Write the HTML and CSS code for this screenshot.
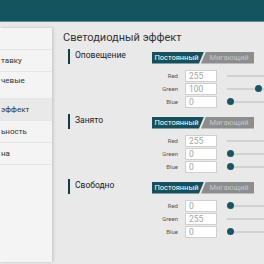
FILE: index.html
```html
<!DOCTYPE html>
<html lang="ru">
<head>
<meta charset="utf-8">
<link rel="stylesheet" href="styles.css">
</head>
<body>
<div class="header"></div>
<div class="layout">
  <nav class="sidebar">
    <div class="item"></div>
    <div class="item">тавку</div>
    <div class="item tall">чевые</div>
    <div class="item active">эффект</div>
    <div class="item">ьность</div>
    <div class="item">на</div>
  </nav>
  <main class="main">
    <h1 class="title">Светодиодный эффект</h1>

    <section class="section">
      <div class="sec-head">
        <span class="sec-name">Оповещение</span>
        <div class="toggle"><span class="on">Постоянный</span><span class="off">Мигающий</span></div>
      </div>
      <div class="row"><span class="lbl">Red</span><span class="val">255</span><div class="slider"><span class="thumb" style="left:70px"></span></div></div>
      <div class="row"><span class="lbl">Green</span><span class="val">100</span><div class="slider"><span class="thumb" style="left:27.5px"></span></div></div>
      <div class="row"><span class="lbl">Blue</span><span class="val">0</span><div class="slider"><span class="thumb" style="left:0px"></span></div></div>
    </section>

    <section class="section">
      <div class="sec-head">
        <span class="sec-name">Занято</span>
        <div class="toggle"><span class="on">Постоянный</span><span class="off">Мигающий</span></div>
      </div>
      <div class="row"><span class="lbl">Red</span><span class="val">255</span><div class="slider"><span class="thumb" style="left:70px"></span></div></div>
      <div class="row"><span class="lbl">Green</span><span class="val">0</span><div class="slider"><span class="thumb" style="left:0px"></span></div></div>
      <div class="row"><span class="lbl">Blue</span><span class="val">0</span><div class="slider"><span class="thumb" style="left:0px"></span></div></div>
    </section>

    <section class="section">
      <div class="sec-head">
        <span class="sec-name">Свободно</span>
        <div class="toggle"><span class="on">Постоянный</span><span class="off">Мигающий</span></div>
      </div>
      <div class="row"><span class="lbl">Red</span><span class="val">0</span><div class="slider"><span class="thumb" style="left:0px"></span></div></div>
      <div class="row"><span class="lbl">Green</span><span class="val">255</span><div class="slider"><span class="thumb" style="left:70px"></span></div></div>
      <div class="row"><span class="lbl">Blue</span><span class="val">0</span><div class="slider"><span class="thumb" style="left:0px"></span></div></div>
    </section>
  </main>
</div>
</body>
</html>
```

FILE: styles.css
```css
html, body {
  margin: 0;
  padding: 0;
  overflow: hidden;
}
body {
  width: 264px;
  height: 264px;
  background: #e9e9e9;
  font-family: Roboto, "Noto Sans", "Liberation Sans", sans-serif;
  color: #333;
}
.header {
  height: 21px;
  background: #14545f;
  border-bottom: 1px solid #5e8d95;
}
.layout {
  display: flex;
  margin-top: 6px;
}
.sidebar {
  flex: 0 0 52px;
  width: 52px;
  height: 234px;
  background: #f4f4f4;
  box-shadow: 1px 0 3px rgba(0, 0, 0, 0.18);
  position: relative;
  z-index: 1;
}
.item {
  height: 21px;
  border-bottom: 1px solid #e6e6e6;
  font-size: 8px;
  line-height: 21px;
  padding-left: 1px;
  white-space: nowrap;
  overflow: hidden;
}
.item.tall {
  height: 26px;
  line-height: 18px;
}
.item.active {
  background: #e9e9e9;
}
.main {
  flex: 1;
  padding-left: 11px;
  min-width: 0;
  height: 236px;
  overflow: hidden;
}
.title {
  margin: 3px 0 0;
  font-size: 11px;
  font-weight: normal;
  line-height: 14px;
  color: #333;
  white-space: nowrap;
}
.section {
  margin-top: 4px;
}
.section + .section {
  margin-top: 6px;
}
.sec-head {
  display: flex;
  align-items: center;
  height: 15px;
  padding-left: 5px;
}
.sec-name {
  flex: 0 0 auto;
  width: 77px;
  height: 15px;
  border-left: 2px solid #123c46;
  padding-left: 5px;
  font-size: 8.5px;
  line-height: 12px;
  color: #222;
  white-space: nowrap;
}
.toggle {
  flex: 0 0 auto;
  display: flex;
  width: 102px;
  height: 12px;
  margin-top: 2px;
  font-size: 7.5px;
  line-height: 12px;
  white-space: nowrap;
}
.toggle .on {
  flex: 0 0 52px;
  background: #16505c;
  color: #fff;
  text-align: center;
  padding-right: 3px;
  box-sizing: border-box;
  clip-path: polygon(0 0, 100% 0, calc(100% - 5px) 100%, 0 100%);
}
.toggle .off {
  flex: 1;
  margin-left: -4px;
  background: #8d8d8d;
  color: #c6c6c6;
  text-align: center;
  padding-left: 4px;
  clip-path: polygon(6px 0, 100% 0, 100% 100%, 1px 100%);
}
.row {
  display: flex;
  align-items: center;
  height: 13px;
}
.sec-head + .row {
  margin-top: 5px;
}
.lbl {
  flex: 0 0 115px;
  text-align: right;
  font-size: 6px;
  color: #555;
  margin-right: 7px;
}
.val {
  flex: 0 0 32px;
  height: 12px;
  box-sizing: border-box;
  border: 1px solid #d0d0d0;
  background: #fff;
  font-size: 8.5px;
  line-height: 10px;
  padding-left: 3px;
  color: #a3a3a3;
  margin-right: 10px;
}
.slider {
  position: relative;
  flex: 0 0 77px;
  height: 2px;
  background: #d2d2d2;
}
.thumb {
  position: absolute;
  top: -2.5px;
  width: 7px;
  height: 7px;
  border-radius: 50%;
  background: #1a5563;
}
```
